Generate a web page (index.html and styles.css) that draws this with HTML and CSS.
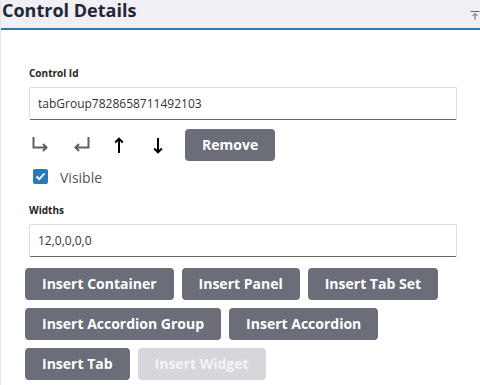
FILE: index.html
```html
<!DOCTYPE html>
<html>
<head>
<meta charset="utf-8">
<link rel="stylesheet" href="styles.css">
</head>
<body>
<div class="panel">
  <div class="header">
    <h2 class="title">Control Details</h2>
    <span class="pin" aria-label="collapse">
      <svg width="10" height="10" viewBox="0 0 10 10"><path d="M0.5 1.5H9.5M5 9.5V3.5M2.5 6L5 3.5L7.5 6" fill="none" stroke="#666" stroke-width="1"/></svg>
    </span>
  </div>
  <div class="body">
    <label class="label">Control Id</label>
    <div class="input">tabGroup7828658711492103</div>
    <div class="tools">
      <span class="tool">
        <svg width="17" height="18" viewBox="0 0 17 18"><path d="M1.5 1V11.5H14.5M11 8L14.5 11.5L11 15" fill="none" stroke="#5f5f5f" stroke-width="2"/></svg>
      </span>
      <span class="tool">
        <svg width="17" height="18" viewBox="0 0 17 18"><path d="M15.5 1V11.5H2.5M6 8L2.5 11.5L6 15" fill="none" stroke="#5f5f5f" stroke-width="2"/></svg>
      </span>
      <span class="tool small">
        <svg width="10" height="18" viewBox="0 0 10 18"><path d="M5 17V3M1.2 6.5L5 2.7L8.8 6.5" fill="none" stroke="#000" stroke-width="2"/></svg>
      </span>
      <span class="tool small">
        <svg width="10" height="18" viewBox="0 0 10 18"><path d="M5 2V16M1.2 12.5L5 16.3L8.8 12.5" fill="none" stroke="#000" stroke-width="2"/></svg>
      </span>
      <button class="btn remove">Remove</button>
    </div>
    <label class="check">
      <span class="box"><svg width="15" height="15" viewBox="0 0 15 15"><path d="M3.5 7.5L6.2 10.2L11.5 4.5" fill="none" stroke="#fff" stroke-width="1.8"/></svg></span>
      <span class="check-text">Visible</span>
    </label>
    <label class="label widths">Widths</label>
    <div class="input">12,0,0,0,0</div>
    <div class="buttons">
      <button class="btn">Insert Container</button>
      <button class="btn">Insert Panel</button>
      <button class="btn">Insert Tab Set</button>
      <button class="btn">Insert Accordion Group</button>
      <button class="btn">Insert Accordion</button>
      <button class="btn">Insert Tab</button>
      <button class="btn disabled">Insert Widget</button>
    </div>
  </div>
</div>
</body>
</html>
```
FILE: styles.css
```css
html, body {
  margin: 0;
  padding: 0;
  background: #fff;
  font-family: "Open Sans", "Noto Sans", sans-serif;
}
.panel {
  width: 480px;
  height: 385px;
  overflow: hidden;
  border-left: 1px solid #e6e6e9;
  box-sizing: border-box;
}
.header {
  height: 28px;
  background: #f0eff4;
  border-bottom: 2px solid #2479b6;
  display: flex;
  align-items: flex-start;
  justify-content: space-between;
  margin-left: -1px;
}
.title {
  margin: 0;
  padding-left: 2px;
  font-size: 18px;
  font-weight: 700;
  color: #222635;
  line-height: 20px;
}
.pin {
  margin-top: 10px;
  width: 10px;
  height: 10px;
  display: block;
}
.pin svg { display: block; }
.body {
  padding: 36px 23px 0 28px;
}
.label {
  display: block;
  font-size: 10px;
  font-weight: 700;
  color: #222;
  line-height: 14px;
  margin-bottom: 7px;
}
.input {
  height: 31px;
  border: 1px solid #ddd;
  border-bottom: 1px solid #666;
  border-radius: 2px;
  padding-left: 8px;
  font-size: 12px;
  line-height: 31px;
  color: #333;
}
.tools {
  display: flex;
  align-items: center;
  margin-top: 9px;
  margin-left: 3px;
}
.tool {
  width: 17px;
  height: 18px;
  margin-right: 24px;
  display: block;
}
.tool.small {
  width: 10px;
  margin-right: 29px;
}
.tool svg { display: block; }
.tools .remove {
  margin-left: -7px;
}
.btn {
  font-family: "Open Sans", "Noto Sans", sans-serif;
  font-weight: 700;
  font-size: 14px;
  color: #fff;
  background: #6b6e78;
  border: none;
  border-radius: 4px;
  height: 32px;
  padding: 0 17px;
  line-height: 32px;
  cursor: pointer;
}
.btn.disabled {
  background: #d6d7db;
  color: #f4f4f6;
  cursor: default;
}
.check {
  display: flex;
  align-items: center;
  margin-top: 6px;
  margin-left: 4px;
}
.box {
  width: 15px;
  height: 15px;
  background: #2a7ab9;
  border-radius: 2px;
  display: block;
}
.box svg { display: block; }
.check-text {
  margin-left: 12px;
  font-size: 14px;
  line-height: 15px;
  padding-top: 3px;
  color: #555;
}
.widths {
  margin-top: 18px;
}
.buttons {
  display: flex;
  flex-wrap: wrap;
  gap: 8px;
  margin-top: 11px;
  margin-left: -4px;
}
```
